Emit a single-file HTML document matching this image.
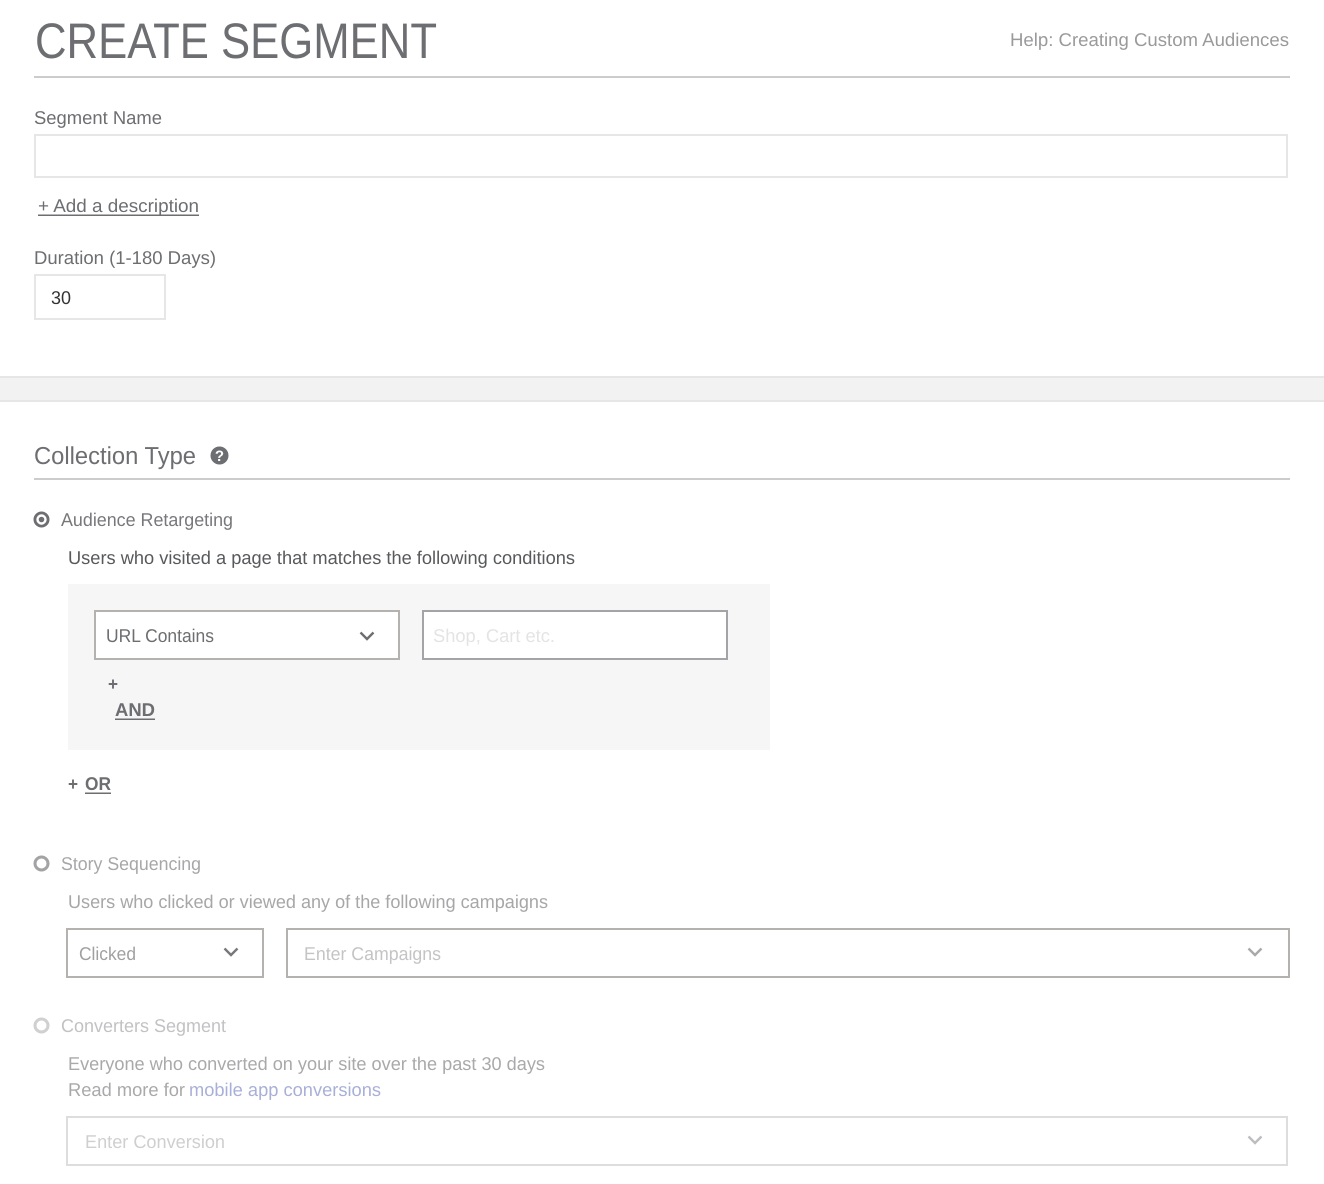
<!DOCTYPE html>
<html lang="en">
<head>
<meta charset="utf-8">
<title>Create Segment</title>
<style>
html,body{margin:0;padding:0;background:#fff;width:1324px;height:1184px;overflow:hidden}
svg{display:block;position:absolute;left:0;top:0}
text{font-family:"Liberation Sans",Arial,sans-serif;font-size:18.5px;text-rendering:geometricPrecision}
</style>
</head>
<body>
<svg width="1324" height="1184" viewBox="0 0 1324 1184" xmlns="http://www.w3.org/2000/svg">
<rect width="1324" height="1184" fill="#fff"/>

<!-- Header -->
<text x="35" y="58" fill="#6d6e71" style="font-size:50px" textLength="402" lengthAdjust="spacingAndGlyphs">CREATE SEGMENT</text>
<text x="1010" y="46" fill="#9a9a9c" textLength="279" lengthAdjust="spacingAndGlyphs">Help: Creating Custom Audiences</text>
<rect x="34" y="76" width="1256" height="2" fill="#cccccc"/>

<!-- Segment name -->
<text x="34" y="124" fill="#6d6e71" textLength="128" lengthAdjust="spacingAndGlyphs">Segment Name</text>
<rect x="35" y="135" width="1252" height="42" fill="#fff" stroke="#e6e6e6" stroke-width="2"/>
<text x="38" y="212" fill="#6d6e71" textLength="161" lengthAdjust="spacingAndGlyphs">+ Add a description</text>
<rect x="38" y="214.5" width="161" height="1.5" fill="#6d6e71"/>

<!-- Duration -->
<text x="34" y="264" fill="#6d6e71" textLength="182" lengthAdjust="spacingAndGlyphs">Duration (1-180 Days)</text>
<rect x="35" y="275" width="130" height="44" fill="#fff" stroke="#e6e6e6" stroke-width="2"/>
<text x="51" y="304" fill="#333" textLength="20" lengthAdjust="spacingAndGlyphs">30</text>

<!-- Divider band -->
<rect x="0" y="376" width="1324" height="26" fill="#f2f2f3"/>
<rect x="0" y="376" width="1324" height="2" fill="#e6e6e6"/>
<rect x="0" y="400" width="1324" height="2" fill="#e6e6e6"/>

<!-- Collection type -->
<text x="34" y="464" fill="#6d6e71" style="font-size:24.500px" textLength="162" lengthAdjust="spacingAndGlyphs">Collection Type</text>
<circle cx="219.5" cy="455.5" r="9" fill="#6d6e71"/>
<text x="219.5" y="461" fill="#fff" text-anchor="middle" style="font-size:15px;font-weight:bold">?</text>
<rect x="34" y="478" width="1256" height="2" fill="#cccccc"/>

<!-- Audience Retargeting -->
<circle cx="41.5" cy="519.5" r="6.600" fill="#fff" stroke="#6d6e71" stroke-width="2.800"/>
<circle cx="41.5" cy="519.5" r="2.800" fill="#6d6e71"/>
<text x="61" y="526" fill="#77787b" textLength="172" lengthAdjust="spacingAndGlyphs">Audience Retargeting</text>
<text x="68" y="564" fill="#58595b" textLength="507" lengthAdjust="spacingAndGlyphs">Users who visited a page that matches the following conditions</text>

<rect x="68" y="584" width="702" height="166" fill="#f6f6f6"/>
<rect x="95" y="611" width="304" height="48" fill="#fff" stroke="#b5b1ae" stroke-width="2"/>
<text x="106" y="642" fill="#6d6e71" textLength="108" lengthAdjust="spacingAndGlyphs">URL Contains</text>
<path d="M360.5 632.5 L367 639 L373.500 632.500" fill="none" stroke="#6d6e71" stroke-width="2.400"/>
<rect x="423" y="611" width="304" height="48" fill="#fff" stroke="#a4a4a8" stroke-width="2"/>
<text x="433" y="642" fill="#e4e4e5" textLength="122" lengthAdjust="spacingAndGlyphs">Shop, Cart etc.</text>

<text x="108" y="690" fill="#6d6e71" style="font-weight:bold;font-size:18px" textLength="10" lengthAdjust="spacingAndGlyphs">+</text>
<text x="115" y="716" fill="#6d6e71" style="font-weight:bold" textLength="40" lengthAdjust="spacingAndGlyphs">AND</text>
<rect x="115" y="718.500" width="40" height="1.500" fill="#6d6e71"/>

<text x="68" y="790" fill="#6d6e71" style="font-weight:bold;font-size:18px" textLength="10" lengthAdjust="spacingAndGlyphs">+</text>
<text x="85" y="790" fill="#6d6e71" style="font-weight:bold" textLength="26" lengthAdjust="spacingAndGlyphs">OR</text>
<rect x="85" y="792.500" width="26" height="1.500" fill="#6d6e71"/>

<!-- Story Sequencing -->
<circle cx="41.5" cy="863.5" r="6.500" fill="#fff" stroke="#a3a3a5" stroke-width="3"/>
<text x="61" y="870" fill="#a7a7a9" textLength="140" lengthAdjust="spacingAndGlyphs">Story Sequencing</text>
<text x="68" y="908" fill="#a7a7a9" textLength="480" lengthAdjust="spacingAndGlyphs">Users who clicked or viewed any of the following campaigns</text>
<rect x="67" y="929" width="196" height="48" fill="#fff" stroke="#b5b1ae" stroke-width="2"/>
<text x="79" y="960" fill="#a0a0a2" textLength="57" lengthAdjust="spacingAndGlyphs">Clicked</text>
<path d="M224.500 948.500 L231 955 L237.500 948.500" fill="none" stroke="#77787b" stroke-width="2.400"/>
<rect x="287" y="929" width="1002" height="48" fill="#fff" stroke="#b5b1ae" stroke-width="2"/>
<text x="304" y="960" fill="#c4c4c6" textLength="137" lengthAdjust="spacingAndGlyphs">Enter Campaigns</text>
<path d="M1248.500 948.500 L1255 955 L1261.500 948.500" fill="none" stroke="#a9a9ab" stroke-width="2.400"/>

<!-- Converters Segment -->
<circle cx="41.5" cy="1025.5" r="6.500" fill="#fff" stroke="#d0d0d1" stroke-width="3"/>
<text x="61" y="1032" fill="#c2c2c4" textLength="165" lengthAdjust="spacingAndGlyphs">Converters Segment</text>
<text x="68" y="1070" fill="#a9a9ab" textLength="477" lengthAdjust="spacingAndGlyphs">Everyone who converted on your site over the past 30 days</text>
<text x="68" y="1096" fill="#a9a9ab" textLength="117" lengthAdjust="spacingAndGlyphs">Read more for</text>
<text x="189" y="1096" fill="#a9b0d8" textLength="192" lengthAdjust="spacingAndGlyphs">mobile app conversions</text>
<rect x="67" y="1117" width="1220" height="48" fill="#fff" stroke="#dddddd" stroke-width="2"/>
<text x="85" y="1148" fill="#cfcfd0" textLength="140" lengthAdjust="spacingAndGlyphs">Enter Conversion</text>
<path d="M1248.500 1136.500 L1255 1143 L1261.500 1136.500" fill="none" stroke="#bdbdbf" stroke-width="2.400"/>
</svg>
</body>
</html>
